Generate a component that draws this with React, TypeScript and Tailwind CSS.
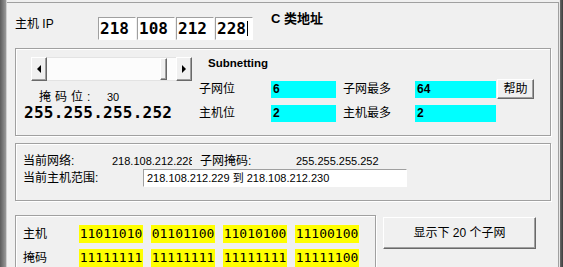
const sans = "font-['Liberation_Sans','Noto_Sans_CJK_SC',sans-serif]";
const mono = "font-['DejaVu_Sans_Mono','Liberation_Mono',monospace]";

const raised =
  "border border-t-white border-l-white border-r-[#696969] border-b-[#696969] shadow-[inset_-1px_-1px_0_#a0a0a0] bg-[#f0f0f0]";
const sunken =
  "border border-t-[#a0a0a0] border-l-[#a0a0a0] border-r-white border-b-white bg-white";
const group =
  "border border-[#a0a0a0] shadow-[inset_1px_1px_0_#fff,1px_1px_0_#fff]";

const ipParts = ["218", "108", "212", "228"];
const hostBits = ["11011010", "01101100", "11010100", "11100100"];
const maskBits = ["11111111", "11111111", "11111111", "11111100"];

function ScrollBar() {
  return (
    <div className="flex h-[24px] w-[161px]">
      <div className={`${raised} flex w-[16px] items-center justify-center`}>
        <div className="h-0 w-0 border-y-[4px] border-r-[4px] border-y-transparent border-r-black" />
      </div>
      <div className="flex flex-1 border-y border-[#e3e3e3] bg-[#fcfcfc]">
        <div className="flex-1" />
        <div className={`${raised} w-[7px]`} />
        <div className="w-[9px]" />
      </div>
      <div className={`${raised} flex w-[16px] items-center justify-center`}>
        <div className="h-0 w-0 border-y-[4px] border-l-[4px] border-y-transparent border-l-black" />
      </div>
    </div>
  );
}

function InfoRow({
  label,
  value,
  label2,
  value2,
  help,
}: {
  label: string;
  value: string;
  label2: string;
  value2: string;
  help?: boolean;
}) {
  return (
    <div className="flex h-[20px] items-center">
      <div className="w-[72px] text-[12px] leading-[14px]">{label}</div>
      <div className="flex h-[17px] w-[65px] items-center bg-[#00ffff] pl-[2px] text-[12px] font-bold">
        {value}
      </div>
      <div className="ml-[7px] w-[72px] text-[12px] leading-[14px]">{label2}</div>
      <div className="flex h-[17px] w-[81px] items-center bg-[#00ffff] pl-[2px] text-[12px] font-bold">
        {value2}
      </div>
      {help && (
        <button
          className={`${raised} ml-[1px] flex h-[20px] w-[37px] items-center justify-center text-[12px] leading-[14px]`}
        >
          帮助
        </button>
      )}
    </div>
  );
}

function BitsRow({ label, bits }: { label: string; bits: string[] }) {
  return (
    <div className="flex h-[18px] items-center">
      <div className="w-[56px] text-[12px] leading-[14px]">{label}</div>
      <div className="flex gap-[8px]">
        {bits.map((b, i) => (
          <div
            key={i}
            className={`${mono} flex h-[18px] w-[64px] items-center justify-center bg-[#ffff00] text-[13px]`}
          >
            {b}
          </div>
        ))}
      </div>
    </div>
  );
}

export default function App() {
  return (
    <div className={`${sans} flex h-[267px] w-[563px] overflow-hidden bg-[#f0f0f0] text-black`}>
      {/* window frame, left */}
      <div className="w-[6px] bg-gradient-to-r from-[#5c5c5c] to-[#9a9a9a]" />
      <div className="w-[1px] bg-[#cfcfcf]" />

      <div className="flex-1 pt-[2px]">
        <div className="h-full border-t border-[#a0a0a0]">
          {/* IP header */}
          <div className="flex h-[45px] items-start pl-[8px]">
            <div className="mt-[14px] w-[83px] text-[12px] leading-[14px]">主机 IP</div>
            <div className="mt-[14px] flex gap-[1px]">
              {ipParts.map((p, i) => (
                <div
                  key={i}
                  className={`${sunken} ${mono} flex h-[23px] w-[38px] items-center pl-[1px] text-[16px] font-semibold`}
                >
                  {p}
                  {i === 3 && <span className="ml-[1px] h-[15px] w-[1px] bg-black" />}
                </div>
              ))}
            </div>
            <div className="ml-[18px] mt-[9px] text-[13px] font-bold leading-[14px]">C 类地址</div>
          </div>

          {/* Subnetting group */}
          <div className={`${group} ml-[8px] mr-[7px] flex h-[88px]`}>
            <div className="w-[183px] pl-[8px] pt-[8px]">
              <div className="ml-[7px]">
                <ScrollBar />
              </div>
              <div className="ml-[15px] mt-[9px] flex h-[14px] items-center">
                <span className="w-[68px] text-[12px] tracking-[4px]">掩码位:</span>
                <span className="text-[11px]">30</span>
              </div>
              <div className={`${mono} text-[16px] font-semibold leading-[18px] tracking-[0.25px]`}>
                255.255.255.252
              </div>
            </div>
            <div className="flex flex-col pt-[7px]">
              <div className="ml-[9px] text-[11.5px] font-bold leading-[14px]">Subnetting</div>
              <div className="mt-[9px] flex flex-col gap-[4px]">
                <InfoRow label="子网位" value="6" label2="子网最多" value2="64" help />
                <InfoRow label="主机位" value="2" label2="主机最多" value2="2" />
              </div>
            </div>
          </div>

          {/* current network group */}
          <div className={`${group} ml-[8px] mr-[7px] mt-[7px] h-[58px] pl-[7px] pt-[10px]`}>
            <div className="flex h-[14px] items-center text-[12px]">
              <span className="w-[89px]">当前网络:</span>
              <span className="w-[80px] overflow-hidden whitespace-nowrap text-[11px]">218.108.212.228</span>
              <span className="ml-[8px] w-[96px]">子网掩码:</span>
              <span className="text-[11px]">255.255.255.252</span>
            </div>
            <div className="mt-[1px] flex h-[18px] items-center">
              <span className="w-[120px] text-[12px]">当前主机范围:</span>
              <div className={`${sunken} flex h-[18px] w-[264px] items-center pl-[3px] text-[11px]`}>
                218.108.212.229 到 218.108.212.230
              </div>
            </div>
          </div>

          {/* binary group + button */}
          <div className="ml-[8px] mt-[14px] flex items-start">
            <div className={`${group} flex h-[80px] w-[361px] flex-col gap-[6px] pl-[7px] pt-[9px]`}>
              <BitsRow label="主机" bits={hostBits} />
              <BitsRow label="掩码" bits={maskBits} />
            </div>
            <button
              className={`${raised} ml-[7px] mt-[2px] flex h-[32px] w-[153px] items-center justify-center text-[12px]`}
            >
              显示下 20 个子网
            </button>
          </div>
        </div>
      </div>

      {/* window frame, right */}
      <div className="mt-[2px] w-[1px] bg-[#a0a0a0]" />
      <div className="w-[1px] bg-[#e6e6e6]" />
      <div className="w-[3px] bg-gradient-to-r from-[#6a6a6a] to-[#3c3c3c]" />
    </div>
  );
}
